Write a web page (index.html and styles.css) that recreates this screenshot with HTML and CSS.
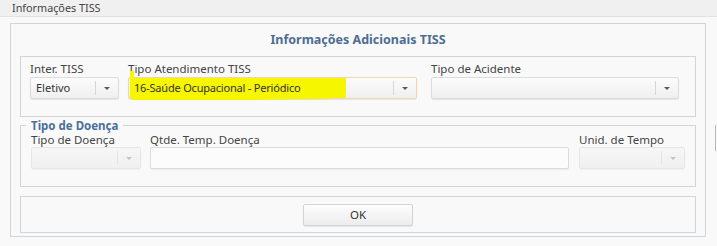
FILE: index.html
```html
<!DOCTYPE html>
<html lang="pt-BR">
<head>
    <meta charset="UTF-8">
    <meta name="viewport" content="width=device-width, initial-scale=1.0">
    <title>Informações TISS</title>
    <link rel="stylesheet" href="styles.css">
</head>
<body>

<div class="titlebar">Informações TISS</div>

<div class="window">
    <div class="window-header">Informações Adicionais TISS</div>

    <div class="section section-top">
        <div class="field field-inter">
            <label>Inter. TISS</label>
            <div class="combo">
                <span class="combo-text">Eletivo</span>
                <span class="combo-trigger"><span class="arrow"></span></span>
            </div>
        </div>
        <div class="field field-atend">
            <label>Tipo Atendimento TISS</label>
            <div class="combo combo-focus">
                <span class="combo-text"><span class="marker">16-Saúde Ocupacional - Periódico</span></span>
                <span class="combo-trigger"><span class="arrow"></span></span>
            </div>
        </div>
        <div class="field field-acidente">
            <label>Tipo de Acidente</label>
            <div class="combo">
                <span class="combo-text"></span>
                <span class="combo-trigger"><span class="arrow"></span></span>
            </div>
        </div>
    </div>

    <fieldset class="section section-doenca">
        <legend>Tipo de Doença</legend>
        <div class="field field-tipo-doenca">
            <label>Tipo de Doença</label>
            <div class="combo combo-disabled">
                <span class="combo-text"></span>
                <span class="combo-trigger"><span class="arrow"></span></span>
            </div>
        </div>
        <div class="field field-qtde">
            <label>Qtde. Temp. Doença</label>
            <input type="text" class="text-input">
        </div>
        <div class="field field-unid">
            <label>Unid. de Tempo</label>
            <div class="combo combo-disabled">
                <span class="combo-text"></span>
                <span class="combo-trigger"><span class="arrow"></span></span>
            </div>
        </div>
    </fieldset>

    <div class="section section-buttons">
        <button type="button" class="btn">OK</button>
    </div>
</div>

<div class="scroll-edge"></div>

</body>
</html>
```

FILE: styles.css
```css
body {
    margin: 0;
    background-color: #f9f9f9;
    font-family: "Noto Sans", "Open Sans", sans-serif;
    font-size: 11.5px;
    color: #333;
    height: 246px;
    overflow: hidden;
    position: relative;
}
.titlebar {
    height: 16px;
    line-height: 15px;
    padding-left: 12px;
    background-color: #f0f0f0;
    border-bottom: 1px solid #e2e2e2;
    color: #444;
    font-size: 10.8px;
}
.window {
    margin: 6px 0 0 10px;
    width: 676px;
    height: 212px;
    padding: 0 9px;
    border: 1px solid #d2d5d8;
    display: flex;
    flex-direction: column;
}
.window-header {
    height: 32px;
    line-height: 31px;
    text-align: center;
    font-weight: bold;
    font-size: 12.5px;
    color: #4d6d92;
}
.section {
    border: 1px solid #d2d5d8;
    margin: 0;
    display: flex;
    align-items: flex-start;
    min-width: 0;
}
.section-top {
    height: 43px;
    padding: 5px 16px 11px 9px;
}
.section-doenca {
    margin-top: 2px;
    padding: 1px 9px 16px 10px;
    height: 49px;
}
.section-doenca legend {
    padding: 0 5px;
    margin-left: -5px;
    font-weight: bold;
    font-size: 11.5px;
    line-height: 13px;
    color: #4a6f9a;
}
.section-buttons {
    margin-top: 9px;
    height: 35px;
    justify-content: center;
    align-items: center;
}
.field {
    display: flex;
    flex-direction: column;
}
.field label {
    height: 15px;
    line-height: 14px;
    color: #444;
}
.section-doenca .field label {
    height: 14px;
    line-height: 13px;
}
.field-inter { width: 89px; margin-right: 9px; }
.field-atend { width: 289px; margin-right: 14px; }
.field-acidente { width: 248px; }
.field-tipo-doenca { width: 110px; margin-right: 9px; }
.field-qtde { width: 419px; margin-right: 10px; }
.field-unid { width: 106px; }

.combo {
    height: 20px;
    border: 1px solid #dcdcdc;
    border-radius: 2px;
    background: linear-gradient(#fcfcfc, #efefef);
    box-shadow: 0 1px 1px rgba(0, 0, 0, 0.08);
    display: flex;
    align-items: center;
    position: relative;
}
.combo-text {
    flex: 1;
    padding-left: 5px;
    font-size: 11px;
    line-height: 20px;
    white-space: nowrap;
}
.combo-trigger {
    width: 22px;
    height: 14px;
    border-left: 1px solid #d6d6d6;
    display: flex;
    align-items: center;
    justify-content: center;
}
.arrow {
    width: 0;
    height: 0;
    border-left: 3px solid transparent;
    border-right: 3px solid transparent;
    border-top: 3px solid #5a5a5a;
}
.combo-focus {
    border-color: #f2d6a6;
}
.combo-disabled {
    background: linear-gradient(#f6f6f6, #f0f0f0);
    border-color: #e6e6e6;
    box-shadow: 0 1px 1px rgba(0, 0, 0, 0.04);
}
.combo-disabled .combo-trigger {
    border-left-color: #e4e4e4;
}
.combo-disabled .arrow {
    border-top-color: #c4c4c4;
}
.marker {
    display: inline-block;
    width: 212px;
    margin-left: -4px;
    padding-left: 4px;
    letter-spacing: -0.2px;
    background-color: #f6f600;
    position: relative;
}
.marker::before {
    content: "";
    position: absolute;
    left: 0;
    top: -7px;
    width: 4px;
    height: 8px;
    background-color: #f6f600;
}
.marker::after {
    content: "";
    position: absolute;
    left: 2px;
    top: 19px;
    width: 200px;
    height: 3px;
    background: linear-gradient(90deg, #f6f600 60%, rgba(246, 246, 0, 0.3));
}
.text-input {
    padding: 0 4px;
    border: 1px solid #dcdcdc;
    border-radius: 2px;
    background: #fcfcfc;
    box-shadow: 0 1px 1px rgba(0, 0, 0, 0.06);
    box-sizing: border-box;
    height: 22px;
    outline: none;
}
.btn {
    width: 110px;
    height: 22px;
    border: 1px solid #d4d4d4;
    border-radius: 2px;
    background: linear-gradient(#fdfdfd, #ececec);
    box-shadow: 0 1px 1px rgba(0, 0, 0, 0.08);
    font-family: inherit;
    font-size: 11.5px;
    color: #333;
}
.scroll-edge {
    position: absolute;
    right: 1px;
    top: 125px;
    width: 1px;
    height: 26px;
    background-color: #b8b8b8;
}
```
